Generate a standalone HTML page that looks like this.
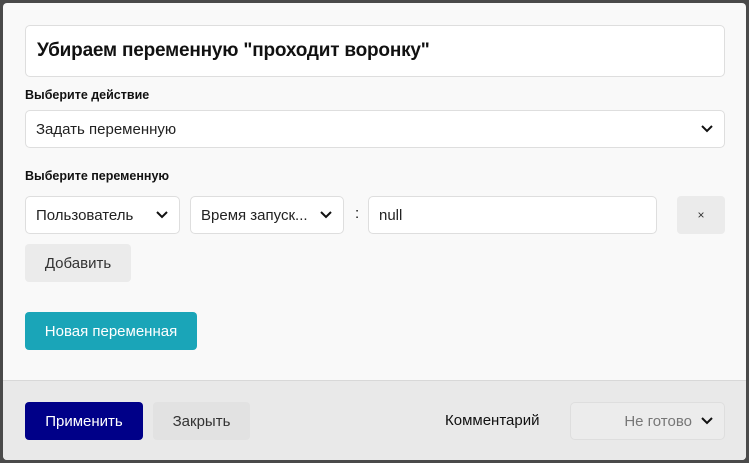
<!DOCTYPE html>
<html><head><meta charset="utf-8"><style>
*{box-sizing:border-box;margin:0;padding:0}
body{width:749px;height:463px;background:#4a4a4a;font-family:"Liberation Sans","DejaVu Sans",sans-serif;position:relative;overflow:hidden;color:#111}
.modal{position:absolute;left:3px;top:3px;width:743px;height:457px;background:#f9f9f9;border-radius:4px;overflow:hidden}
.a{position:absolute}
.box{position:absolute;background:#fff;border:1px solid #dedede;border-radius:5px;font-size:15px;display:flex;align-items:center;padding-left:10px;color:#222}
.chev{position:absolute;right:10px;top:50%;margin-top:-5px;width:14px;height:10px}
.lbl{position:absolute;font-weight:bold;font-size:12.5px;color:#111}
.btn{position:absolute;border-radius:4px;font-size:15px;display:flex;align-items:center;justify-content:center}
.footer{position:absolute;left:0;top:377px;width:743px;height:80px;background:#e9e9e9;border-top:1px solid #d8d8d8}
</style></head><body>
<div class="modal">
<div class="box" style="left:22px;top:22px;width:700px;height:52px;font-size:19px;font-weight:bold;color:#111;padding-left:11px;letter-spacing:-0.2px">Убираем переменную "проходит воронку"</div>
<div class="lbl" style="left:22px;top:85px">Выберите действие</div>
<div class="box" style="left:22px;top:107px;width:700px;height:38px">Задать переменную<svg class="chev" viewBox="0 0 14 10"><path d="M2 2l5 5 5-5" stroke="#111" stroke-width="2" fill="none"/></svg></div>
<div class="lbl" style="left:22px;top:166px">Выберите переменную</div>
<div class="box" style="left:22px;top:193px;width:155px;height:38px">Пользователь<svg class="chev" viewBox="0 0 14 10"><path d="M2 2l5 5 5-5" stroke="#111" stroke-width="2" fill="none"/></svg></div>
<div class="box" style="left:187px;top:193px;width:154px;height:38px">Время запуск...<svg class="chev" viewBox="0 0 14 10"><path d="M2 2l5 5 5-5" stroke="#111" stroke-width="2" fill="none"/></svg></div>
<div class="a" style="left:352px;top:202px;font-size:15px">:</div>
<div class="box" style="left:365px;top:193px;width:289px;height:38px">null</div>
<div class="btn" style="left:674px;top:193px;width:48px;height:38px;background:#ebebeb;font-size:12px;color:#333">×</div>
<div class="btn" style="left:22px;top:241px;width:106px;height:38px;background:#ebebeb;color:#333">Добавить</div>
<div class="btn" style="left:22px;top:309px;width:172px;height:38px;background:#1aa5b8;color:#fff">Новая переменная</div>
<div class="footer">
<div class="btn" style="left:22px;top:21px;width:118px;height:38px;background:#000088;color:#fff">Применить</div>
<div class="btn" style="left:150px;top:21px;width:97px;height:38px;background:#e2e2e2;color:#333">Закрыть</div>
<div class="a" style="left:442px;top:31px;font-size:15px;color:#111">Комментарий</div>
<div class="box" style="left:567px;top:21px;width:155px;height:38px;background:#ececec;justify-content:flex-end;padding-right:32px;color:#777">Не готово<svg class="chev" viewBox="0 0 14 10"><path d="M2 2l5 5 5-5" stroke="#111" stroke-width="2" fill="none"/></svg></div>
</div>
</div>
</body></html>
